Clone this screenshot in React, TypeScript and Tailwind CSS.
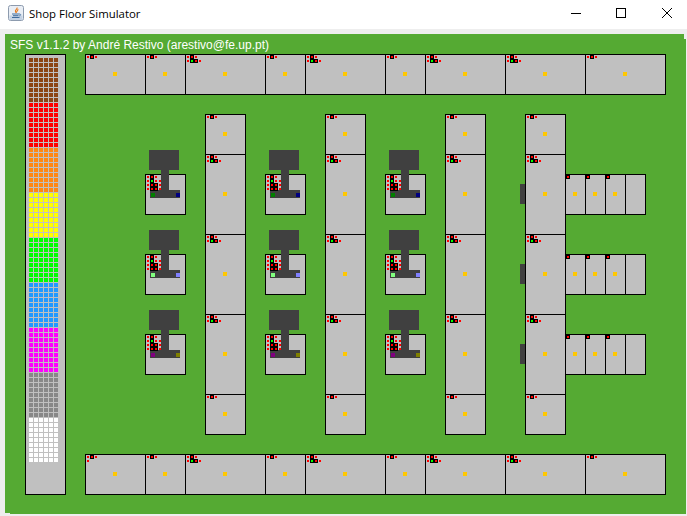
type Sensor = "none" | "single" | "singleExtra" | "double" | "side";
type BlockDef = {
  x: number;
  y: number;
  w: number;
  h: number;
  sensor: Sensor;
  dot?: boolean;
  stub?: boolean;
};
type Px = [number, number, number, number, string];

const RED = "#ff0000";
const LIME = "#00ff00";
const DARK = "#404040";

// everything on the floor snaps to a 20px cell, origin is the canvas corner
const rowSpec: [number, number, Sensor][] = [
  [4, 3, "single"],
  [7, 2, "single"],
  [9, 4, "double"],
  [13, 2, "single"],
  [15, 4, "double"],
  [19, 2, "single"],
  [21, 4, "double"],
  [25, 4, "double"],
  [29, 4, "single"],
];

const topRow: BlockDef[] = rowSpec.map(([x, w, sensor]) => ({ x, y: 1, w, h: 2, sensor, dot: true }));
const bottomRow: BlockDef[] = rowSpec.map(([x, w, sensor], i) => ({
  x,
  y: 21,
  w,
  h: 2,
  sensor: i === 0 ? "singleExtra" : sensor,
  dot: true,
}));

const columns = [10, 16, 22, 26];
const columnBlocks: BlockDef[] = columns.flatMap((x) => [
  { x, y: 4, w: 2, h: 2, sensor: "single" as Sensor, dot: true },
  { x, y: 6, w: 2, h: 4, sensor: "double" as Sensor, dot: true, stub: x === 26 },
  { x, y: 10, w: 2, h: 4, sensor: "double" as Sensor, dot: true, stub: x === 26 },
  { x, y: 14, w: 2, h: 4, sensor: "double" as Sensor, dot: true, stub: x === 26 },
  { x, y: 18, w: 2, h: 2, sensor: "single" as Sensor, dot: true },
]);

const sideBlocks: BlockDef[] = [7, 11, 15].flatMap((y) => [
  { x: 28, y, w: 1, h: 2, sensor: "side" as Sensor, dot: true },
  { x: 29, y, w: 1, h: 2, sensor: "side" as Sensor, dot: true },
  { x: 30, y, w: 1, h: 2, sensor: "side" as Sensor, dot: true },
  { x: 31, y, w: 1, h: 2, sensor: "none" as Sensor },
]);

const machineRows = [
  { y: 7, left: "#008000", right: "#000080" },
  { y: 11, left: "#80ff80", right: "#8080ff" },
  { y: 15, left: "#800080", right: "#808000" },
];
const machineCols = [7, 13, 19];

const stock = [
  "bg-[#8b4513]",
  "bg-[#ff0000]",
  "bg-[#ff8811]",
  "bg-[#ffff00]",
  "bg-[#00ff00]",
  "bg-[#2299ff]",
  "bg-[#ff00ff]",
  "bg-[#888888]",
  "bg-[#ffffff]",
];

const single: Px[] = [
  [2, 2, 2, 2, RED],
  [5, 1, 4, 4, "#000"],
  [6, 2, 2, 2, RED],
  [10, 2, 2, 2, RED],
];
const extra: Px[] = [[2, 6, 2, 2, RED]];
const double: Px[] = [
  ...single,
  ...extra,
  [5, 5, 8, 4, "#000"],
  [6, 6, 2, 2, LIME],
  [10, 6, 2, 2, RED],
  [14, 6, 2, 2, RED],
];
const side: Px[] = [
  [1, 1, 4, 4, "#000"],
  [2, 2, 2, 2, RED],
];
const sensorPixels: Record<Sensor, Px[]> = {
  none: [],
  single,
  singleExtra: [...single, ...extra],
  double,
  side,
};

// sensor panel of a machine: three columns of lamps on two black strips
const machineLamps: Px[] = [
  [5, 1, 4, 16, "#000"],
  [9, 9, 4, 8, "#000"],
  ...[2, 6, 10, 14].map((y): Px => [2, y, 2, 2, RED]),
  ...[2, 6, 10, 14].map((y): Px => [6, y, 2, 2, y === 6 ? LIME : RED]),
  ...[2, 6, 10, 14].map((y): Px => [10, y, 2, 2, RED]),
  ...[6, 10, 14].map((y): Px => [14, y, 2, 2, RED]),
];

function cell(x: number, y: number, w: number, h: number) {
  return { gridColumn: `${x + 1} / span ${w}`, gridRow: `${y + 1} / span ${h}` };
}

function Pixels({ items }: { items: Px[] }) {
  return (
    <>
      {items.map(([x, y, w, h, fill], i) => (
        <rect key={i} x={x} y={y} width={w} height={h} fill={fill} />
      ))}
    </>
  );
}

function Block({ def }: { def: BlockDef }) {
  return (
    <div
      className="relative -mb-px -mr-px flex items-center justify-center border border-black bg-[#c0c0c0] pb-px pr-px"
      style={cell(def.x, def.y, def.w, def.h)}
    >
      {def.sensor !== "none" && (
        <svg width="18" height="10" viewBox="0 0 18 10" shapeRendering="crispEdges" className="absolute -left-px -top-px">
          <Pixels items={sensorPixels[def.sensor]} />
        </svg>
      )}
      {def.dot && <div className="size-[4px] bg-[#ffc800]" />}
      {def.stub && <div className="absolute -left-[6px] h-[20px] w-[5px] bg-[#404040]" />}
    </div>
  );
}

function Machine({ x, y, left, right }: { x: number; y: number; left: string; right: string }) {
  return (
    <div
      className="relative -mb-px -mr-px border border-black bg-[#c0c0c0]"
      style={cell(x, y, 2, 2)}
    >
      <svg
        width="41"
        height="49"
        viewBox="0 -24 41 49"
        shapeRendering="crispEdges"
        className="absolute -left-px -top-[25px]"
      >
        <rect x="4" y="-24" width="30" height="20" fill={DARK} />
        <rect x="16" y="-4" width="8" height="20" fill={DARK} />
        <rect x="5" y="16" width="30" height="8" fill={DARK} />
        <rect x="6" y="19" width="4" height="4" fill={left} />
        <rect x="31" y="19" width="4" height="4" fill={right} />
        <Pixels items={machineLamps} />
      </svg>
    </div>
  );
}

function Warehouse() {
  return (
    <div
      className="-mb-px -mr-px border border-black bg-[#c0c0c0] pl-[3px] pt-[3px]"
      style={cell(1, 1, 2, 22)}
    >
      <div className="grid grid-cols-[repeat(6,4px)] gap-px">
        {stock.flatMap((color, band) =>
          Array.from({ length: 54 }, (_, i) => <div key={`${band}-${i}`} className={`h-[4px] ${color}`} />)
        )}
      </div>
    </div>
  );
}

function JavaIcon() {
  return (
    <svg width="16" height="16" viewBox="0 0 16 16" className="shrink-0">
      <rect x="0.5" y="0.5" width="15" height="15" rx="2" fill="#e9eef5" stroke="#8d9bae" />
      <rect x="1.5" y="10.5" width="13" height="4.5" fill="#c4d2e4" />
      <path d="M9 2.5c1 1.5-2.5 2.3-1.5 4.2.3.6.6 1 .8 1.3-.5-1.4 2.5-2.4 1.5-4" fill="none" stroke="#e8791c" strokeWidth="1.1" />
      <path d="M4 9h7M5 10.7h5.5M4 12.5h7.5" stroke="#3f6c9e" strokeWidth="1" fill="none" />
      <path d="M11 9c2.1-.4 2.3 1.5.2 1.9" stroke="#3f6c9e" strokeWidth="0.9" fill="none" />
    </svg>
  );
}

function TitleBar() {
  return (
    <div className="flex h-[29px] items-center bg-white pb-[3px] pl-[8px]">
      <JavaIcon />
      <span className="ml-[5px] pt-[2px] font-['Open_Sans',sans-serif] text-[11.4px] text-black">Shop Floor Simulator</span>
      <div className="ml-auto mr-[-2px] flex h-full items-center">
        <div className="w-[45px] pl-[17px]">
          <svg width="10" height="10" viewBox="0 0 10 10"><path d="M0 5.5h10" stroke="#000" /></svg>
        </div>
        <div className="w-[45px] pl-[17px]">
          <svg width="10" height="10" viewBox="0 0 10 10"><rect x="0.5" y="0.5" width="9" height="9" fill="none" stroke="#000" /></svg>
        </div>
        <div className="w-[45px] pl-[18px]">
          <svg width="10" height="10" viewBox="0 0 10 10"><path d="M0 0l10 10M10 0L0 10" stroke="#000" strokeWidth="1" /></svg>
        </div>
      </div>
    </div>
  );
}

export default function App() {
  const blocks = [...topRow, ...bottomRow, ...columnBlocks, ...sideBlocks];
  return (
    <div className="h-[516px] w-[687px] overflow-hidden bg-[#eeeeee] font-['Liberation_Sans',sans-serif]">
      <TitleBar />
      <div className="pl-[5px] pt-[5px]">
        <div className="relative grid h-[480px] w-[681px] grid-cols-[repeat(34,20px)] grid-rows-[repeat(24,20px)] bg-[#55aa33]">
          <span className="absolute left-[5px] top-[4px] text-[12px] leading-[14px] text-white">
            SFS v1.1.2 by André Restivo (arestivo@fe.up.pt)
          </span>
          <Warehouse />
          {blocks.map((b) => (
            <Block key={`${b.x}-${b.y}`} def={b} />
          ))}
          {machineRows.flatMap((row) =>
            machineCols.map((x) => <Machine key={`${x}-${row.y}`} x={x} y={row.y} left={row.left} right={row.right} />)
          )}
          {/* the two window panels don't line up at the corners */}
          <div className="absolute right-0 top-0 h-[5px] w-[2px] bg-[#eeeeee]" />
          <div className="absolute bottom-0 left-0 h-px w-[5px] bg-[#eeeeee]" />
        </div>
      </div>
    </div>
  );
}
